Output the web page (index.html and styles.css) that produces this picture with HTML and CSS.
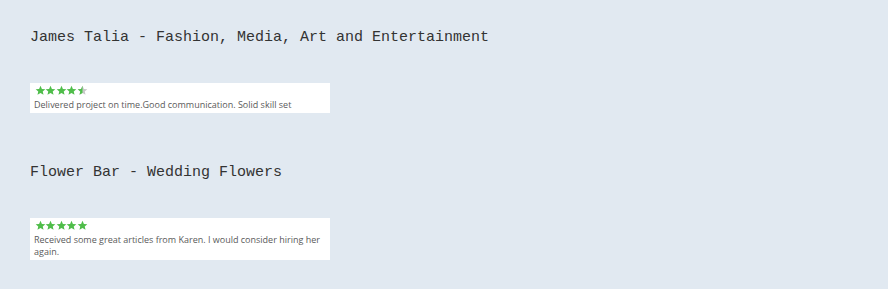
FILE: index.html
```html
<!DOCTYPE html>
<html lang="en">
<head>
  <meta charset="UTF-8">
  <meta name="viewport" content="width=device-width, initial-scale=1.0">
  <title>Reviews</title>
  <link rel="stylesheet" href="styles.css">
</head>
<body>
  <div id="reviews">
    <div class="review">
      <h2 class="title">James Talia - Fashion, Media, Art and Entertainment</h2>
      <div class="card">
        <div class="stars">
          <svg class="star" viewBox="0 0 24 24"><path d="M12 1.5l3.1 7 7.4.6-5.6 4.9 1.7 7.4L12 17.5l-6.6 3.9 1.7-7.4-5.6-4.9 7.4-.6z"/></svg>
          <svg class="star" viewBox="0 0 24 24"><path d="M12 1.5l3.1 7 7.4.6-5.6 4.9 1.7 7.4L12 17.5l-6.6 3.9 1.7-7.4-5.6-4.9 7.4-.6z"/></svg>
          <svg class="star" viewBox="0 0 24 24"><path d="M12 1.5l3.1 7 7.4.6-5.6 4.9 1.7 7.4L12 17.5l-6.6 3.9 1.7-7.4-5.6-4.9 7.4-.6z"/></svg>
          <svg class="star" viewBox="0 0 24 24"><path d="M12 1.5l3.1 7 7.4.6-5.6 4.9 1.7 7.4L12 17.5l-6.6 3.9 1.7-7.4-5.6-4.9 7.4-.6z"/></svg>
          <svg class="star" viewBox="0 0 24 24"><path class="empty" d="M12 1.5l3.1 7 7.4.6-5.6 4.9 1.7 7.4L12 17.5l-6.6 3.9 1.7-7.4-5.6-4.9 7.4-.6z"/><path d="M12 1.5L8.9 8.5l-7.4.6 5.6 4.9-1.7 7.4L12 17.5z"/></svg>
        </div>
        <p class="comment">Delivered project on time.Good communication. Solid skill set</p>
      </div>
    </div>

    <div class="review">
      <h2 class="title">Flower Bar - Wedding Flowers</h2>
      <div class="card">
        <div class="stars">
          <svg class="star" viewBox="0 0 24 24"><path d="M12 1.5l3.1 7 7.4.6-5.6 4.9 1.7 7.4L12 17.5l-6.6 3.9 1.7-7.4-5.6-4.9 7.4-.6z"/></svg>
          <svg class="star" viewBox="0 0 24 24"><path d="M12 1.5l3.1 7 7.4.6-5.6 4.9 1.7 7.4L12 17.5l-6.6 3.9 1.7-7.4-5.6-4.9 7.4-.6z"/></svg>
          <svg class="star" viewBox="0 0 24 24"><path d="M12 1.5l3.1 7 7.4.6-5.6 4.9 1.7 7.4L12 17.5l-6.6 3.9 1.7-7.4-5.6-4.9 7.4-.6z"/></svg>
          <svg class="star" viewBox="0 0 24 24"><path d="M12 1.5l3.1 7 7.4.6-5.6 4.9 1.7 7.4L12 17.5l-6.6 3.9 1.7-7.4-5.6-4.9 7.4-.6z"/></svg>
          <svg class="star" viewBox="0 0 24 24"><path d="M12 1.5l3.1 7 7.4.6-5.6 4.9 1.7 7.4L12 17.5l-6.6 3.9 1.7-7.4-5.6-4.9 7.4-.6z"/></svg>
        </div>
        <p class="comment">Received some great articles from Karen. I would consider hiring her again.</p>
      </div>
    </div>
  </div>
</body>
</html>
```

FILE: styles.css
```css
body {
  margin: 0;
  padding: 0;
  background-color: #e1e9f1;
  font-family: "Open Sans", sans-serif;
}

#reviews {
  padding: 29px 30px 0;
}

.review {
  margin-bottom: 51px;
}

.review:last-child {
  margin-bottom: 0;
}

.title {
  margin: 0 0 36px;
  font-family: "Courier New", "Liberation Mono", monospace;
  font-size: 15px;
  font-weight: normal;
  line-height: 18px;
  color: #333;
}

.card {
  width: 300px;
  box-sizing: border-box;
  background-color: white;
  padding: 1px 4px 2px;
}

.stars {
  display: flex;
  height: 12px;
  align-items: center;
  padding-left: 1px;
}

.star {
  width: 11px;
  height: 11px;
  fill: #4fbd4a;
  margin-right: -0.6px;
}

.star .empty {
  fill: #c8c8c8;
}

.comment {
  margin: 3px 0 0;
  font-size: 9px;
  line-height: 12px;
  color: #5a5a5a;
}
```
